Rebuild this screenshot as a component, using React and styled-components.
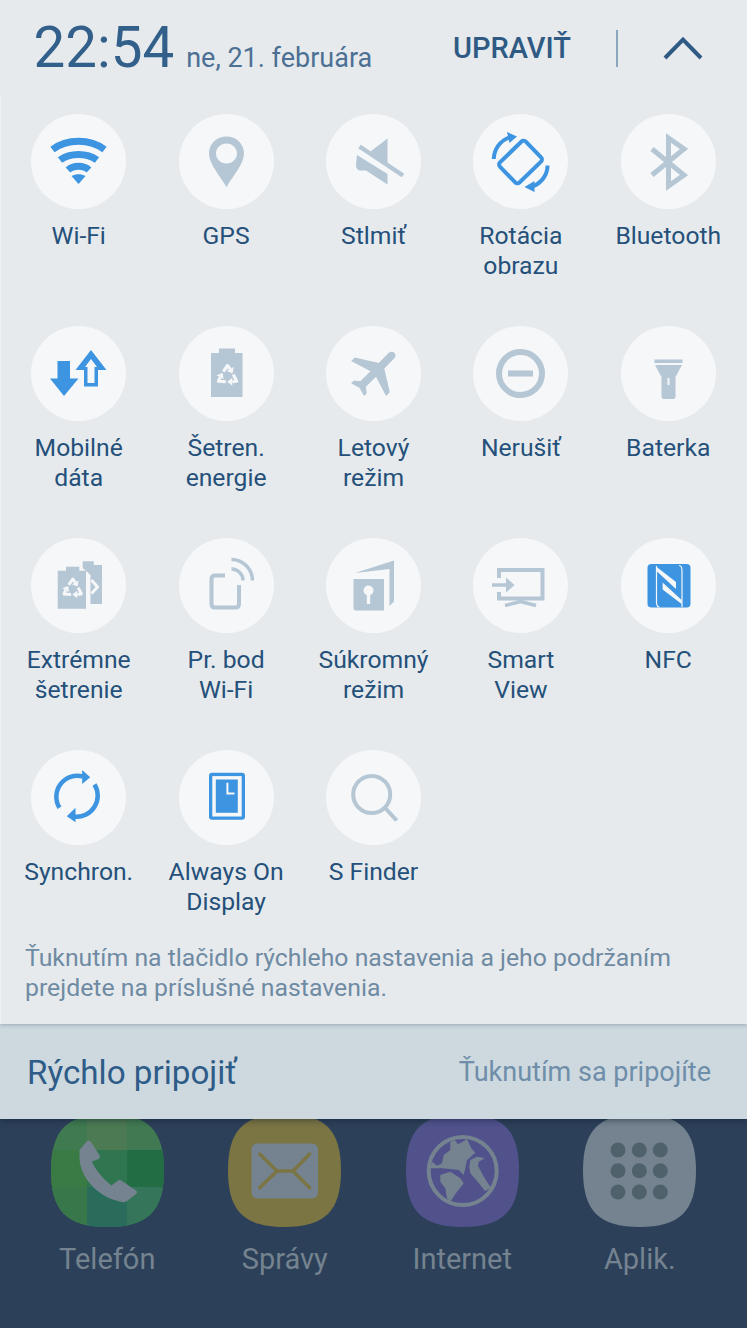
import React from "react";
import styled, { createGlobalStyle } from "styled-components";

const BLUE = "#3d94e0";
const GREY = "#b5c6d4";
const CIRCLE_BG = "#f5f7f9";
const DOCK_FG = "#74838f";

const GlobalStyle = createGlobalStyle`
  html, body {
    margin: 0;
    padding: 0;
    background: #2c4059;
  }
  body {
    font-family: Roboto, "Noto Sans", sans-serif;
  }
`;

const Screen = styled.div`
  width: 747px;
  height: 1328px;
  overflow: hidden;
  display: flex;
  flex-direction: column;
  background: #2c4059;
`;

const Panel = styled.div`
  background: #e6eaed;
  height: 1024px;
  flex: none;
  display: flex;
  flex-direction: column;
  position: relative;
  z-index: 3;
  box-shadow: 0 1px 4px rgba(60, 80, 100, 0.35);
`;

const Header = styled.div`
  height: 97px;
  flex: none;
  display: flex;
  align-items: flex-start;
  padding: 13px 44px 0 33.5px;
  box-sizing: border-box;
`;

const Clock = styled.div`
  display: flex;
  align-items: baseline;
  gap: 12px;
`;

const Time = styled.span`
  font-size: 56.5px;
  line-height: 70px;
  color: #33608b;
`;

const DateText = styled.span`
  font-size: 27px;
  color: #4c7094;
`;

const Actions = styled.div`
  margin-left: auto;
  height: 70px;
  display: flex;
  align-items: center;
`;

const EditButton = styled.span`
  font-size: 29px;
  font-weight: 500;
  color: #2f5a83;
`;

const Divider = styled.span`
  width: 2px;
  height: 37px;
  margin: 0 45px 0 45px;
  background: #8ba6bd;
`;

const Body = styled.div`
  flex: 1;
  border-left: 1px solid #eff2f4;
`;

const Tiles = styled.div`
  display: grid;
  grid-template-columns: repeat(5, 147.4px);
  row-gap: 45px;
  padding: 16.5px 0 0 4px;
`;

const Tile = styled.div`
  display: flex;
  flex-direction: column;
  align-items: center;
`;

const Circle = styled.div`
  width: 95px;
  height: 95px;
  border-radius: 50%;
  background: ${CIRCLE_BG};
`;

const TileLabel = styled.div`
  margin-top: 12px;
  min-height: 60px;
  font-size: 24.7px;
  line-height: 30px;
  text-align: center;
  white-space: pre-line;
  color: #24507a;
`;

const Hint = styled.div`
  margin: 26.5px 0 0 24px;
  font-size: 24.8px;
  line-height: 30px;
  white-space: nowrap;
  color: #6f8ba3;
`;

const QuickConnect = styled.div`
  height: 95px;
  flex: none;
  position: relative;
  z-index: 2;
  box-sizing: border-box;
  padding: 1px 36px 0 27px;
  display: flex;
  align-items: center;
  justify-content: space-between;
  background: #cdd8df;
  box-shadow: 0 2px 6px rgba(10, 25, 40, 0.4);
`;

const QuickTitle = styled.span`
  font-size: 33.2px;
  color: #2e5c88;
`;

const QuickHint = styled.span`
  font-size: 27px;
  color: #6f8ea9;
`;

const Dock = styled.div`
  display: grid;
  grid-template-columns: repeat(4, 177.5px);
  padding-left: 18.5px;
`;

const DockItem = styled.div`
  display: flex;
  flex-direction: column;
  align-items: center;
  margin-top: -5px;
`;

const DockIcon = styled.svg`
  display: block;
  width: 113px;
  height: 113px;
`;

const DockLabel = styled.div`
  margin-top: 14px;
  font-size: 29px;
  line-height: 36px;
  color: ${DOCK_FG};
`;

const Glyph = ({ children }) => (
  <svg width="95" height="95" viewBox="0 0 95 95" style={{ display: "block" }}>
    {children}
  </svg>
);

const RecycleArrow = () => (
  <g>
    <path
      d="M-4 -4.1 L0 -10 L2.5 -6.7"
      fill="none"
      stroke={CIRCLE_BG}
      strokeWidth="3"
      strokeLinejoin="round"
    />
    <path d="M5.8 -8.6 L4.9 -2.4 L-0.8 -4.8 Z" fill={CIRCLE_BG} />
  </g>
);

const Recycle = ({ x, y, s = 1 }) => (
  <g transform={`translate(${x} ${y}) scale(${s})`}>
    <RecycleArrow />
    <g transform="rotate(120)">
      <RecycleArrow />
    </g>
    <g transform="rotate(240)">
      <RecycleArrow />
    </g>
  </g>
);

const WifiIcon = () => (
  <Glyph>
    <g fill="none" stroke={BLUE} strokeWidth="7">
      <path d="M21.5 35.5 C36 24.5 59 24.5 73.5 35.5" />
      <path d="M29 46 C39 38.5 56 38.5 66 46" />
      <path d="M37 56 C42.5 51 52.5 51 58 56" />
    </g>
    <path d="M40.5 62 C45 59.5 50 59.5 54.5 62 L47.5 70 Z" fill={BLUE} />
  </Glyph>
);

const GpsIcon = () => (
  <Glyph>
    <path
      fillRule="evenodd"
      d="M47.5 22.5 C57.5 22.5 65 30 65 39.5 C65 50 54 62 47.5 73 C41 62 30 50 30 39.5 C30 30 37.5 22.5 47.5 22.5 Z M47.5 29.5 C41.5 29.5 37 34 37 39.5 C37 45 41.5 49.5 47.5 49.5 C53.5 49.5 58 45 58 39.5 C58 34 53.5 29.5 47.5 29.5 Z"
      fill={GREY}
    />
  </Glyph>
);

const MuteIcon = () => (
  <Glyph>
    <path d="M61.5 24.5 V49.5 L44.5 37.5 Z" fill={GREY} />
    <path d="M31 41 L61.5 60 V70.5 L40 56.5 H35 C32 56.5 30 54.5 30 51 Z" fill={GREY} />
    <path d="M32 36 L74 65" stroke={CIRCLE_BG} strokeWidth="4" />
    <path d="M33.5 32.5 L77 61.5" stroke={GREY} strokeWidth="4.5" />
  </Glyph>
);

const RotateIcon = () => (
  <Glyph>
    <rect
      x="29.5"
      y="34"
      width="36"
      height="28"
      rx="3"
      transform="rotate(-44 47.5 48)"
      fill="none"
      stroke={BLUE}
      strokeWidth="4"
    />
    <path d="M20.8 45 C21 35 27 27 36 23.5" fill="none" stroke={BLUE} strokeWidth="4" />
    <path d="M34 18 L44 22.5 L36.5 29 Z" fill={BLUE} />
    <path d="M74.5 51.5 C74.5 61 68.5 69 59.5 72.5" fill="none" stroke={BLUE} strokeWidth="4" />
    <path d="M61.5 67 L51.5 73 L61.5 78 Z" fill={BLUE} />
  </Glyph>
);

const BluetoothIcon = () => (
  <Glyph>
    <path
      d="M31 35 L63 61 L47.5 72 V24 L63 35 L31 61"
      fill="none"
      stroke={GREY}
      strokeWidth="5"
    />
  </Glyph>
);

const DataIcon = () => (
  <Glyph>
    <path d="M26.5 35 H39 V52.5 H47.5 L33 70 L19 52.5 H26.5 Z" fill={BLUE} />
    <path d="M60 24 L75.5 44 H67 V60.5 H53 V44 H44.5 Z" fill={BLUE} />
    <path d="M60 33 L66 41 H63.5 V57 H56.5 V41 H54 Z" fill={CIRCLE_BG} />
  </Glyph>
);

const SaverIcon = () => (
  <Glyph>
    <path d="M40 22.5 H56 V27 H63.5 V71 H32 V27 H40 Z" fill={GREY} />
    <Recycle x={48.5} y={50} s={1.05} />
  </Glyph>
);

const PlaneIcon = () => (
  <Glyph>
    <g transform="translate(50 45.2) rotate(45) scale(2.6) translate(-11.5 -12)">
      <path
        d="M21 16v-2l-8-5V3.5c0-.83-.67-1.5-1.5-1.5S10 2.67 10 3.5V9l-8 5v2l8-2.5V19l-2 1.5V22l3.5-1 3.5 1v-1.5L13 19v-5.5l8 2.5z"
        fill={GREY}
      />
    </g>
  </Glyph>
);

const DndIcon = () => (
  <Glyph>
    <circle cx="47.5" cy="47.5" r="21.5" fill="none" stroke={GREY} strokeWidth="6" />
    <rect x="35" y="44.5" width="25" height="6" fill={GREY} />
  </Glyph>
);

const TorchIcon = () => (
  <Glyph>
    <rect x="33.5" y="33.5" width="28" height="3.5" fill={GREY} />
    <path d="M34 39 H61 L54.5 51 V70.5 Q54.5 73 52 73 H43 Q40.5 73 40.5 70.5 V51 Z" fill={GREY} />
    <rect x="46.5" y="52" width="2" height="7" fill={CIRCLE_BG} />
  </Glyph>
);

const ExtremeIcon = () => (
  <Glyph>
    <path d="M51.7 23.3 H62.7 V27 H71 V66 H59.5 V37 L51.7 30 Z" fill={GREY} />
    <path d="M35 28.7 H48.3 V32.7 H55 V70.7 H26.7 V32.7 H35 Z" fill={GREY} />
    <Recycle x={41.7} y={51} />
    <path d="M60.5 42 L66.5 49 L60.5 55.5" fill="none" stroke={CIRCLE_BG} strokeWidth="3" />
  </Glyph>
);

const HotspotIcon = () => (
  <Glyph>
    <path
      d="M46 37.5 H36 Q32.5 37.5 32.5 41 V66 Q32.5 69.5 36 69.5 H56.5 Q60 69.5 60 66 V47"
      fill="none"
      stroke={GREY}
      strokeWidth="4"
    />
    <g fill="none" stroke={GREY} strokeWidth="3.5">
      <path d="M52.5 31 A11.5 11.5 0 0 1 64 42.5" />
      <path d="M52.5 21.5 A21 21 0 0 1 73.5 42.5" />
    </g>
  </Glyph>
);

const PrivateIcon = () => (
  <Glyph>
    <path d="M29 35 L68 22.5 V63.5 L63.5 68 V31 Z" fill={GREY} />
    <path d="M27.5 41 H58 V72.5 H30 Q27.5 72.5 27.5 70 Z" fill={GREY} />
    <circle cx="42.5" cy="52.5" r="5" fill={CIRCLE_BG} />
    <rect x="40.8" y="54" width="3.4" height="12" fill={CIRCLE_BG} />
  </Glyph>
);

const SmartViewIcon = () => (
  <Glyph>
    <path
      d="M26 40 V32 H69.5 V60.5 H26 V54"
      fill="none"
      stroke={GREY}
      strokeWidth="4"
    />
    <path d="M19 47 H36" stroke={GREY} strokeWidth="3.5" />
    <path d="M33 39.5 L41.5 47 L33 54.5 Z" fill={GREY} />
    <path d="M32 67.5 L47.5 63.5 L63 67.5" fill="none" stroke={GREY} strokeWidth="3.5" />
  </Glyph>
);

const NfcIcon = () => (
  <Glyph>
    <rect x="26.5" y="26" width="43" height="43.5" rx="4" fill={BLUE} />
    <path d="M36 29.3 L55 44 V51 L36 33.5 Z" fill={CIRCLE_BG} />
    <path d="M60.6 66.1 L41.6 51.4 V44.4 L60.6 61.9 Z" fill={CIRCLE_BG} />
    <path
      d="M35.5 28 V64 Q35.5 69 38.5 69 M61 69 V33 Q61 27.5 58 27.5"
      fill="none"
      stroke={CIRCLE_BG}
      strokeWidth="1.2"
    />
  </Glyph>
);

const SyncIcon = () => (
  <Glyph>
    <g fill="none" stroke={BLUE} strokeWidth="4.5">
      <path d="M28.5 57.8 A21 21 0 0 1 52 26.5" />
      <path d="M63.5 34.5 A21 21 0 0 1 43 66.5" />
    </g>
    <path d="M51.2 20 L59.2 27.2 L51.2 34 Z" fill={BLUE} />
    <path d="M44.5 57.8 L35.8 66.2 L44.5 72.2 Z" fill={BLUE} />
  </Glyph>
);

const AodIcon = () => (
  <Glyph>
    <rect x="30" y="22.8" width="36" height="47" rx="3" fill={BLUE} />
    <rect x="33.3" y="26.1" width="29.4" height="40.4" fill={CIRCLE_BG} />
    <rect x="36.8" y="29.5" width="22" height="33.3" fill={BLUE} />
    <path d="M48.4 32.8 V43.4 H55.5" fill="none" stroke={CIRCLE_BG} strokeWidth="2" />
  </Glyph>
);

const FinderIcon = () => (
  <Glyph>
    <circle cx="45.7" cy="44.5" r="18.5" fill="none" stroke={GREY} strokeWidth="4" />
    <path d="M59 57.8 L70.7 70.5" stroke={GREY} strokeWidth="4" />
  </Glyph>
);

const tiles = [
  { label: "Wi-Fi", Icon: WifiIcon },
  { label: "GPS", Icon: GpsIcon },
  { label: "Stlmiť", Icon: MuteIcon },
  { label: "Rotácia\nobrazu", Icon: RotateIcon },
  { label: "Bluetooth", Icon: BluetoothIcon },
  { label: "Mobilné\ndáta", Icon: DataIcon },
  { label: "Šetren.\nenergie", Icon: SaverIcon },
  { label: "Letový\nrežim", Icon: PlaneIcon },
  { label: "Nerušiť", Icon: DndIcon },
  { label: "Baterka", Icon: TorchIcon },
  { label: "Extrémne\nšetrenie", Icon: ExtremeIcon },
  { label: "Pr. bod\nWi-Fi", Icon: HotspotIcon },
  { label: "Súkromný\nrežim", Icon: PrivateIcon },
  { label: "Smart\nView", Icon: SmartViewIcon },
  { label: "NFC", Icon: NfcIcon },
  { label: "Synchron.", Icon: SyncIcon },
  { label: "Always On\nDisplay", Icon: AodIcon },
  { label: "S Finder", Icon: FinderIcon },
];

const SQUIRCLE = "M56.5 0 C97 0 113 16 113 56.5 C113 97 97 113 56.5 113 C16 113 0 97 0 56.5 C0 16 16 0 56.5 0 Z";

const phoneTiles = [
  ["#3f7a50", "#4c7a52", "#417a52"],
  ["#3a7b45", "#2f7550", "#236d45"],
  ["#38774a", "#2a6c5c", "#35755a"],
];
const tileX = [0, 36, 76];
const tileY = [0, 36, 73];
const tileSize = [36, 40, 37];

const PhoneApp = () => (
  <DockIcon viewBox="0 0 113 113">
    <clipPath id="phone-shape">
      <path d={SQUIRCLE} />
    </clipPath>
    <g clipPath="url(#phone-shape)">
      {phoneTiles.map((row, r) =>
        row.map((fill, c) => (
          <rect
            key={`${r}-${c}`}
            x={tileX[c]}
            y={tileY[r]}
            width={tileSize[c]}
            height={113 - tileY[r]}
            fill={fill}
          />
        ))
      )}
    </g>
    <path
      d="M28.5 36 L36 27 Q38 25.5 40 28 L49 42 Q49.5 44 47.5 45 L41 47.5 C43 54 52 65 60.5 71.5 L67 66.5 Q69 65.5 71 67 L85 76.5 Q87 78.5 85 80 L76 87 Q74 88.5 71 88 C48 84 28 64 28.5 42 Z"
      fill={DOCK_FG}
    />
  </DockIcon>
);

const MailApp = () => (
  <DockIcon viewBox="0 0 113 113">
    <path d={SQUIRCLE} fill="#7b7443" />
    <rect x="23.5" y="29.5" width="66.5" height="55" rx="6" fill={DOCK_FG} />
    <path
      d="M31.7 40 L49 57 H65 L81.7 40 M49 57 L31.7 73.7 M65 57 L81.7 73.7"
      fill="none"
      stroke="#7b7443"
      strokeWidth="3.5"
      strokeLinecap="round"
    />
  </DockIcon>
);

const InternetApp = () => (
  <DockIcon viewBox="0 0 113 113">
    <path d={SQUIRCLE} fill="#51528c" />
    <circle cx="56.7" cy="57" r="34" fill="none" stroke={DOCK_FG} strokeWidth="4" />
    <path
      d="M44.3 27.7 L48.7 26 L52 30.3 L61 25.3 L65.3 34.3 L69.3 38.7 L61 46 L60 51 L57.7 61 L52.7 56 L46 55.3 L36 54.3 L29.3 52.7 L36 49.3 L37.7 41 L44.3 36 Z"
      fill={DOCK_FG}
    />
    <path
      d="M34.3 61 L44.3 57.7 L54.3 64.3 L57.7 69.3 L51 77.7 L44.3 87.7 L41 84.3 L39.3 74.3 L34.3 67.7 Z"
      fill={DOCK_FG}
    />
    <path
      d="M64.3 46 L71 42.7 L78.7 44.3 L72.7 47.7 L72 52 L78 63 L85 74 L79 77 L72 68 L64.3 59.3 L63.3 52.7 Z"
      fill={DOCK_FG}
    />
    <path d="M26 47.7 L34.3 54.3 L24.3 54.3 Z" fill={DOCK_FG} />
  </DockIcon>
);

const AppsApp = () => {
  const xs = [35, 56.3, 77.3];
  const ys = [36, 56.7, 78];
  return (
    <DockIcon viewBox="0 0 113 113">
      <path d={SQUIRCLE} fill={DOCK_FG} />
      {ys.map((cy) =>
        xs.map((cx) => <circle key={`${cx}-${cy}`} cx={cx} cy={cy} r="7.5" fill="#4f626b" />)
      )}
    </DockIcon>
  );
};

const dock = [
  { label: "Telefón", Icon: PhoneApp },
  { label: "Správy", Icon: MailApp },
  { label: "Internet", Icon: InternetApp },
  { label: "Aplik.", Icon: AppsApp },
];

const App = () => (
  <Screen>
    <GlobalStyle />
    <Panel>
      <Header>
        <Clock>
          <Time>22:54</Time>
          <DateText>ne, 21. februára</DateText>
        </Clock>
        <Actions>
          <EditButton>UPRAVIŤ</EditButton>
          <Divider />
          <svg width="40" height="24" viewBox="0 0 40 24" style={{ display: "block" }}>
            <path d="M2 22 L20 3.5 L38 22" fill="none" stroke="#2f5a83" strokeWidth="4" />
          </svg>
        </Actions>
      </Header>
      <Body>
        <Tiles>
          {tiles.map(({ label, Icon }) => (
            <Tile key={label}>
              <Circle>
                <Icon />
              </Circle>
              <TileLabel>{label}</TileLabel>
            </Tile>
          ))}
        </Tiles>
        <Hint>
          Ťuknutím na tlačidlo rýchleho nastavenia a jeho podržaním
          <br />
          prejdete na príslušné nastavenia.
        </Hint>
      </Body>
    </Panel>
    <QuickConnect>
      <QuickTitle>Rýchlo pripojiť</QuickTitle>
      <QuickHint>Ťuknutím sa pripojíte</QuickHint>
    </QuickConnect>
    <Dock>
      {dock.map(({ label, Icon }) => (
        <DockItem key={label}>
          <Icon />
          <DockLabel>{label}</DockLabel>
        </DockItem>
      ))}
    </Dock>
  </Screen>
);

export default App;
